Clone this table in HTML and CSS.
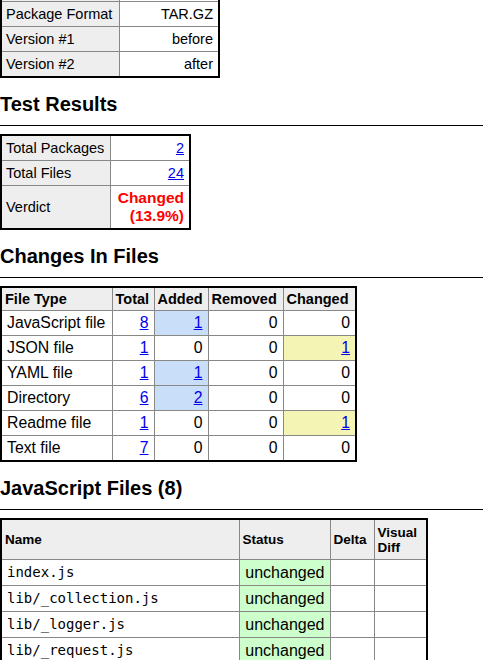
FILE: index.html
```html
<!DOCTYPE html>
<html>
<head>
<meta charset="utf-8">
<title>Package Diff Report</title>
<link rel="stylesheet" href="styles.css">
</head>
<body>
<div class="report">
  <table class="summary info">
    <colgroup><col class="info-k"><col class="info-v"></colgroup>
    <tr><th>Package Name</th><td>example</td></tr>
    <tr><th>Package Format</th><td>TAR.GZ</td></tr>
    <tr><th>Version #1</th><td>before</td></tr>
    <tr><th>Version #2</th><td>after</td></tr>
  </table>

  <h2>Test Results</h2>
  <table class="summary results">
    <colgroup><col class="res-k"><col class="res-v"></colgroup>
    <tr><th>Total Packages</th><td><a href="#">2</a></td></tr>
    <tr><th>Total Files</th><td><a href="#">24</a></td></tr>
    <tr><th>Verdict</th><td class="verdict">Changed (13.9%)</td></tr>
  </table>

  <h2>Changes In Files</h2>
  <table class="changes">
    <colgroup><col class="c-type"><col class="c-total"><col class="c-added"><col class="c-removed"><col class="c-changed"></colgroup>
    <thead>
      <tr><th>File Type</th><th>Total</th><th>Added</th><th>Removed</th><th>Changed</th></tr>
    </thead>
    <tbody>
      <tr><td>JavaScript file</td><td class="num"><a href="#">8</a></td><td class="num added"><a href="#">1</a></td><td class="num">0</td><td class="num">0</td></tr>
      <tr><td>JSON file</td><td class="num"><a href="#">1</a></td><td class="num">0</td><td class="num">0</td><td class="num changed"><a href="#">1</a></td></tr>
      <tr><td>YAML file</td><td class="num"><a href="#">1</a></td><td class="num added"><a href="#">1</a></td><td class="num">0</td><td class="num">0</td></tr>
      <tr><td>Directory</td><td class="num"><a href="#">6</a></td><td class="num added"><a href="#">2</a></td><td class="num">0</td><td class="num">0</td></tr>
      <tr><td>Readme file</td><td class="num"><a href="#">1</a></td><td class="num">0</td><td class="num">0</td><td class="num changed"><a href="#">1</a></td></tr>
      <tr><td>Text file</td><td class="num"><a href="#">7</a></td><td class="num">0</td><td class="num">0</td><td class="num">0</td></tr>
    </tbody>
  </table>

  <h2>JavaScript Files (8)</h2>
  <table class="files">
    <colgroup><col class="f-name"><col class="f-status"><col class="f-delta"><col class="f-visual"></colgroup>
    <thead>
      <tr><th>Name</th><th>Status</th><th>Delta</th><th>Visual Diff</th></tr>
    </thead>
    <tbody>
      <tr><td class="fname">index.js</td><td class="status">unchanged</td><td></td><td></td></tr>
      <tr><td class="fname">lib/_collection.js</td><td class="status">unchanged</td><td></td><td></td></tr>
      <tr><td class="fname">lib/_logger.js</td><td class="status">unchanged</td><td></td><td></td></tr>
      <tr><td class="fname">lib/_request.js</td><td class="status">unchanged</td><td></td><td></td></tr>
      <tr><td class="fname">lib/_utils.js</td><td class="status">unchanged</td><td></td><td></td></tr>
    </tbody>
  </table>
</div>
</body>
</html>
```

FILE: styles.css
```css
html, body {
  margin: 0;
  padding: 0;
  background: #fff;
}
body {
  font-family: "Liberation Sans", Arial, sans-serif;
  color: #000;
  overflow: hidden;
}
.report {
  margin-top: -25px;
}
a {
  color: #0000ee;
  text-decoration: underline;
}
table {
  border-collapse: collapse;
  border: 2px solid #000;
  table-layout: fixed;
}
th, td {
  border: 1px solid #888;
  overflow: hidden;
}
h2 {
  font-size: 20px;
  line-height: 23px;
  font-weight: bold;
  margin: 15px 0 8px;
  padding-bottom: 9px;
  border-bottom: 1px solid #000;
}

/* summary tables */
.summary {
  font-size: 14.5px;
}
.summary th {
  font-weight: normal;
  text-align: left;
  background: #eee;
  padding: 3px 4px;
  line-height: 18px;
}
.summary td {
  text-align: right;
  padding: 3px 5px 3px 4px;
  line-height: 18px;
}
.info { width: 218px; }
.info-k { width: 118px; }
.info-v { width: 100px; }
.results { width: 189px; }
.res-k { width: 109px; }
.res-v { width: 80px; }
.verdict {
  color: #f00;
  font-weight: bold;
  font-size: 15.5px;
}

/* changes table */
.changes { width: 355px; }
.c-type { width: 111px; }
.c-total { width: 42px; }
.c-added { width: 54px; }
.c-removed { width: 75px; }
.c-changed { width: 73px; }
.changes th {
  background: #eee;
  font-size: 14.5px;
  line-height: 16px;
  padding: 3px 3px;
  text-align: left;
  white-space: nowrap;
}
.changes td {
  font-size: 15.8px;
  line-height: 18px;
  padding: 3px 5px;
  white-space: nowrap;
}
.changes .num { text-align: right; }
.changes .added { background: #c9def8; }
.changes .changed { background: #f4f4b4; }

/* files table */
.files { width: 426px; }
.f-name { width: 238px; }
.f-status { width: 91px; }
.f-delta { width: 44px; }
.f-visual { width: 53px; }
.files th {
  background: #eee;
  font-size: 13.5px;
  line-height: 15px;
  padding: 4px 3px;
  text-align: left;
  height: 31px;
}
.files td {
  font-size: 16px;
  line-height: 19px;
  padding: 3px 5px;
}
.files td.fname {
  font-family: "DejaVu Sans Mono", monospace;
  font-size: 14px;
}
.files td.status {
  background: #ccffcc;
  text-align: right;
}
```
